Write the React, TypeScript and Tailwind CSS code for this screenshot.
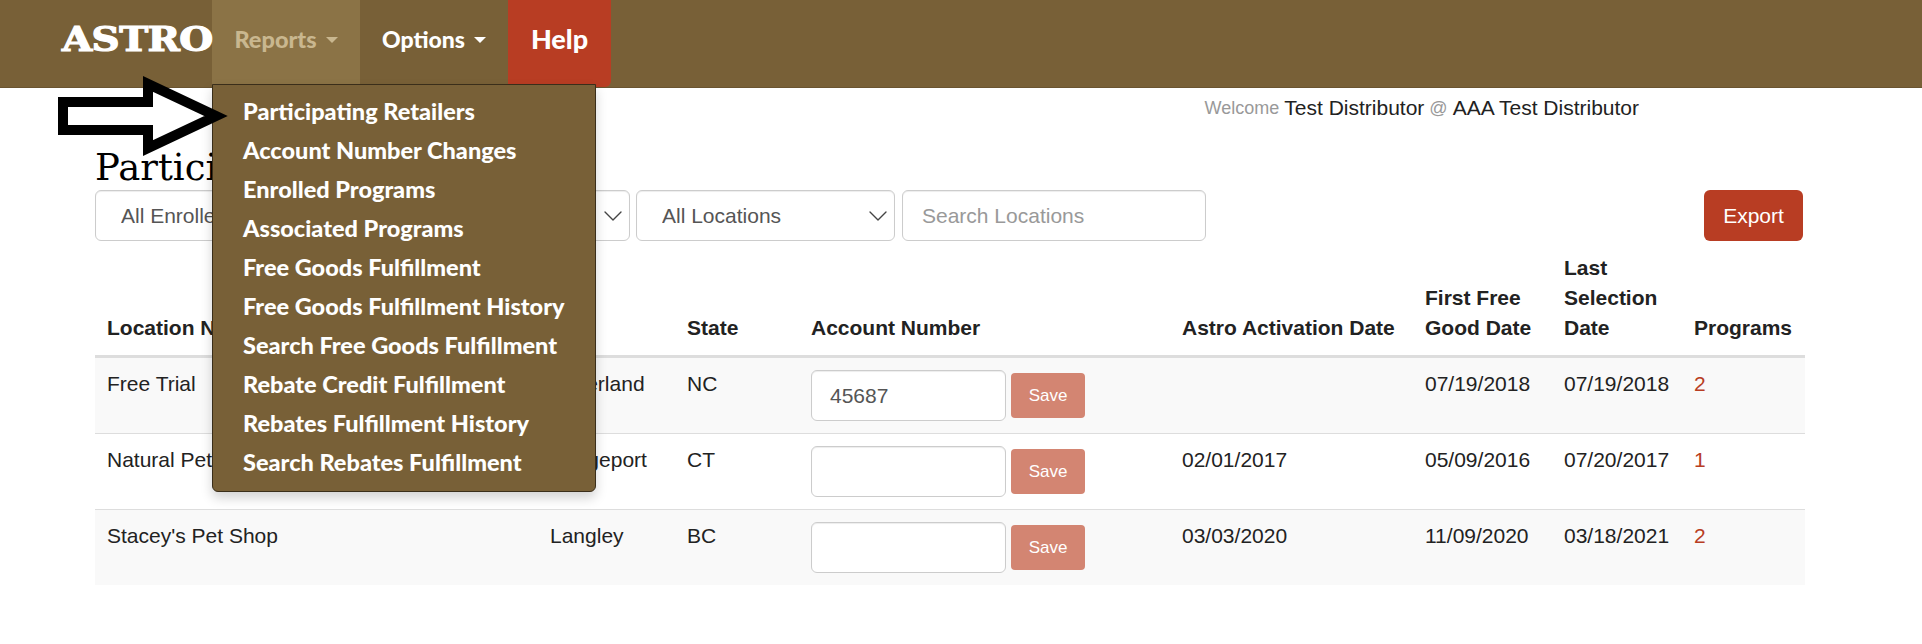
import { ChevronDown } from "lucide-react";

const menuItems = [
  "Participating Retailers",
  "Account Number Changes",
  "Enrolled Programs",
  "Associated Programs",
  "Free Goods Fulfillment",
  "Free Goods Fulfillment History",
  "Search Free Goods Fulfillment",
  "Rebate Credit Fulfillment",
  "Rebates Fulfillment History",
  "Search Rebates Fulfillment",
];

const rows = [
  { name: "Free Trial", city: "Asherland", state: "NC", account: "45687", activation: "", first: "07/19/2018", last: "07/19/2018", programs: "2" },
  { name: "Natural Pet Center", city: "Bridgeport", state: "CT", account: "", activation: "02/01/2017", first: "05/09/2016", last: "07/20/2017", programs: "1" },
  { name: "Stacey's Pet Shop", city: "Langley", state: "BC", account: "", activation: "03/03/2020", first: "11/09/2020", last: "03/18/2021", programs: "2" },
];

const Caret = () => (
  <span className="ml-[9px] inline-block border-x-[6px] border-t-[6px] border-x-transparent border-t-current" />
);

const Select = ({ label, width }: { label: string; width: string }) => (
  <div className={`${width} flex h-[51px] items-center justify-between rounded-md border border-[#ccc] bg-white pl-[25px] text-[#555] shadow-[inset_0_1px_1px_rgba(0,0,0,0.075)]`}>
    <span className="truncate">{label}</span>
    <ChevronDown size={32} strokeWidth={1} className="shrink-0 text-[#444]" />
  </div>
);

const App = () => {
  return (
    <div className="relative h-[644px] overflow-hidden bg-white font-['Liberation_Sans',sans-serif] text-[21px] text-[#222]">
      <nav className="flex h-[88px] items-stretch border-b border-[#6a5430] bg-[#786037] pl-[62px] font-['Lato',sans-serif] font-black text-white">
        <div className="flex w-[150px] items-center pb-[8px] font-['DejaVu_Serif',serif] text-[33px] font-bold [-webkit-text-stroke:1.2px_white]">
          <span className="origin-left scale-x-[1.18] tracking-[-0.5px]">ASTRO</span>
        </div>
        <div className="flex w-[148px] items-center justify-center bg-[#8b7346] pb-[8px] text-[23.5px] text-[#c9b78f]">
          Reports
          <Caret />
        </div>
        <div className="flex w-[148px] items-center justify-center pb-[8px] text-[23px]">
          Options
          <Caret />
        </div>
        <div className="flex w-[103px] items-center justify-center rounded-br-md bg-[#b83d23] pb-[8px] text-[27px]">
          Help
        </div>
      </nav>

      <main className="px-[95px] pr-[117px]">
        <div className="mt-[7px] mr-[166px] flex h-[26px] items-center justify-end leading-[26px]">
          <span className="text-[18px] text-[#999]">Welcome&nbsp;</span>
          <span>Test Distributor</span>
          <span className="text-[18px] text-[#999]">&nbsp;@&nbsp;</span>
          <span>AAA Test Distributor</span>
        </div>
        <h1 className="mt-[24px] h-[45px] font-['DejaVu_Serif',serif] text-[37px] font-normal leading-[45px] text-black">
          Participating Retailers
        </h1>
        <div className="flex items-stretch gap-[6px]">
          <Select label="All Enrolled Programs" width="w-[280px]" />
          <Select label="All Programs" width="w-[249px]" />
          <Select label="All Locations" width="w-[259px]" />
          <div className="ml-[1px] flex h-[51px] w-[304px] items-center rounded-md border border-[#ccc] pl-[19px] text-[#999] shadow-[inset_0_1px_1px_rgba(0,0,0,0.075)]">
            Search Locations
          </div>
          <button className="ml-auto mr-[2px] h-[51px] w-[99px] rounded-md bg-[#b83d23] text-white">
            Export
          </button>
        </div>

        <table className="w-[1710px] table-fixed border-collapse">
          <colgroup>
            <col className="w-[443px]" />
            <col className="w-[137px]" />
            <col className="w-[124px]" />
            <col className="w-[371px]" />
            <col className="w-[243px]" />
            <col className="w-[139px]" />
            <col className="w-[130px]" />
            <col className="w-[123px]" />
          </colgroup>
          <thead>
            <tr className="border-b-[3px] border-[#ddd] text-left align-bottom font-bold leading-[30px]">
              <th className="p-[12px]">Location Name</th>
              <th className="p-[12px]">City</th>
              <th className="p-[12px]">State</th>
              <th className="p-[12px]">Account Number</th>
              <th className="p-[12px]">Astro Activation Date</th>
              <th className="p-[12px]">First Free Good Date</th>
              <th className="p-[12px]">Last Selection Date</th>
              <th className="p-[12px]">Programs</th>
            </tr>
          </thead>
          <tbody>
            {rows.map((row) => (
              <tr key={row.name} className="border-b border-[#ddd] align-top leading-[28px] odd:bg-[#f9f9f9] last:border-b-0">
                <td className="p-[12px]">{row.name}</td>
                <td className="p-[12px]">{row.city}</td>
                <td className="p-[12px]">{row.state}</td>
                <td className="p-[12px]">
                  <div className="flex items-center gap-[5px]">
                    <div className="flex h-[51px] w-[195px] items-center rounded-md border border-[#ccc] bg-white pl-[18px] text-[#555] shadow-[inset_0_1px_1px_rgba(0,0,0,0.075)]">
                      {row.account}
                    </div>
                    <button className="h-[45px] w-[74px] rounded-[4px] bg-[#d38572] text-[17px] text-white">
                      Save
                    </button>
                  </div>
                </td>
                <td className="p-[12px]">{row.activation}</td>
                <td className="p-[12px]">{row.first}</td>
                <td className="p-[12px]">{row.last}</td>
                <td className="p-[12px] text-[#b83d23]">{row.programs}</td>
              </tr>
            ))}
          </tbody>
        </table>
      </main>

      {/* reports dropdown */}
      <ul className="absolute left-[212px] top-[84px] flex h-[408px] w-[384px] flex-col rounded-b-md border border-[#3a2e1a] bg-[#786037] pl-[30px] pt-[7px] font-['Lato',sans-serif] text-[23.5px] font-black text-white shadow-[0_6px_12px_rgba(0,0,0,0.175)]">
        {menuItems.map((item) => (
          <li key={item} className="h-[39px] leading-[39px]">
            {item}
          </li>
        ))}
      </ul>

      {/* annotation arrow */}
      <svg className="absolute left-[50px] top-[70px]" width="190" height="90" viewBox="0 0 190 90">
        <path d="M13 32H98V14L166 46L98 78V60H13Z" fill="white" stroke="black" strokeWidth="10" strokeLinejoin="miter" />
      </svg>
    </div>
  );
};

export default App;
